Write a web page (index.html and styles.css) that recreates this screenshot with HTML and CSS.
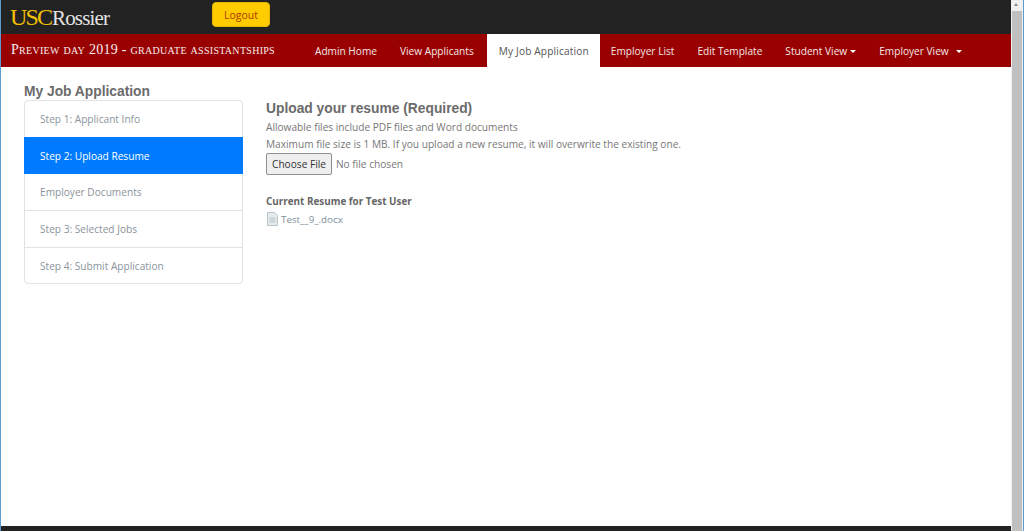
FILE: index.html
```html
<!DOCTYPE html>
<html lang="en">
<head>
    <meta charset="UTF-8">
    <meta name="viewport" content="width=device-width, initial-scale=1.0">
    <title>My Job Application</title>
    <link rel="stylesheet" href="styles.css">
</head>
<body>

<div class="page">
    <div class="topbar">
        <a class="logo" href="#"><span class="logo-usc">USC</span><span class="logo-rossier">Rossier</span></a>
        <button class="logout">Logout</button>
    </div>

    <div class="navbar">
        <div class="event-title">Preview day 2019 - graduate assistantships</div>
        <ul class="nav">
            <li><a href="#">Admin Home</a></li>
            <li><a href="#">View Applicants</a></li>
            <li class="active"><a href="#">My Job Application</a></li>
            <li><a href="#">Employer List</a></li>
            <li><a href="#">Edit Template</a></li>
            <li><a href="#" class="dropdown">Student View</a></li>
            <li><a href="#" class="dropdown spaced">Employer View</a></li>
        </ul>
    </div>

    <div class="content">
        <div class="sidebar">
            <h2>My Job Application</h2>
            <div class="steps">
                <a href="#">Step 1: Applicant Info</a>
                <a href="#" class="active">Step 2: Upload Resume</a>
                <a href="#">Employer Documents</a>
                <a href="#">Step 3: Selected Jobs</a>
                <a href="#">Step 4: Submit Application</a>
            </div>
        </div>

        <div class="main">
            <h3>Upload your resume (Required)</h3>
            <p>Allowable files include PDF files and Word documents</p>
            <p>Maximum file size is 1 MB. If you upload a new resume, it will overwrite the existing one.</p>
            <div class="file-row">
                <button class="choose">Choose File</button>
                <span>No file chosen</span>
            </div>
            <h4>Current Resume for Test User</h4>
            <a class="file-link" href="#">
                <svg width="11" height="14" viewBox="0 0 11 14">
                    <path d="M.5.5h7l3 3v10H.5z" fill="#e6ecee" stroke="#b9c3c8"/>
                    <path d="M2.5 6h6M2.5 8h6M2.5 10h6" stroke="#b5c0c5"/>
                </svg>
                Test__9_.docx
            </a>
        </div>
    </div>

    <div class="footer"></div>
</div>

<div class="scrollbar">
    <div class="arrow"></div>
    <div class="thumb"></div>
</div>

</body>
</html>
```

FILE: styles.css
```css
html, body {
    height: 100%;
}

body {
    font-family: 'Open Sans', sans-serif;
    font-size: 10.15px;
    background-color: #fff;
    color: #777;
    margin: 0;
    display: flex;
    overflow: hidden;
    border-left: 1px solid #5b9bd0;
    border-right: 1px solid #5b9bd0;
    box-sizing: border-box;
}

a {
    text-decoration: none;
}

.page {
    flex: 1;
    display: flex;
    flex-direction: column;
    min-width: 0;
}

.topbar {
    height: 34px;
    background-color: #222;
    display: flex;
    align-items: flex-start;
    flex-shrink: 0;
}

.logo {
    font-family: 'Liberation Serif', serif;
    line-height: 24px;
    margin: 5px 0 0 9px;
    width: 202px;
    white-space: nowrap;
}

.logo-usc {
    color: #f0c000;
    font-size: 24px;
    letter-spacing: -1.9px;
}

.logo-rossier {
    color: #e4e4e4;
    font-size: 21px;
    letter-spacing: -0.85px;
    margin-left: 1px;
}

.logout {
    width: 58px;
    height: 25px;
    margin-top: 2px;
    background-color: #ffcc00;
    border: 1px solid #e5b800;
    border-radius: 4px;
    color: #b03a00;
    font-family: 'Open Sans', sans-serif;
    font-size: 10.5px;
    padding: 0;
}

.navbar {
    height: 33px;
    background-color: #990000;
    display: flex;
    flex-shrink: 0;
}

.event-title {
    font-family: 'Liberation Serif', serif;
    font-variant: small-caps;
    font-size: 14px;
    letter-spacing: 0.29px;
    color: #f8eeee;
    width: 292.5px;
    padding: 8px 0 0 10px;
    white-space: nowrap;
}

.nav {
    list-style: none;
    margin: 0;
    padding: 0;
    display: flex;
}

.nav a {
    display: block;
    height: 33px;
    line-height: 34px;
    padding: 0 11.5px;
    color: #f5e6e6;
    white-space: nowrap;
}

.nav .active {
    margin: 0 -1px 0 2px;
}

.nav .active a {
    background-color: #fff;
    color: #555;
    letter-spacing: 0.15px;
}

.dropdown::after {
    content: "";
    display: inline-block;
    margin-left: 3px;
    vertical-align: 2px;
    border-top: 3.5px solid #fff;
    border-left: 3.5px solid transparent;
    border-right: 3.5px solid transparent;
}

.spaced::after {
    margin-left: 7px;
}

.content {
    flex: 1;
    display: flex;
    padding: 15px 0 0 23px;
}

.sidebar {
    width: 219px;
    margin-right: 23px;
}

.sidebar h2 {
    font-family: 'Liberation Sans', sans-serif;
    font-size: 13.8px;
    line-height: 20px;
    margin: 0 0 -2px;
    color: #6b6b6b;
}

.steps {
    border: 1px solid #e2e2e2;
    border-radius: 4px;
    background: #fff;
}

.steps a {
    display: block;
    height: 36px;
    line-height: 36px;
    padding-left: 15px;
    color: #8a949c;
    border-bottom: 1px solid #e2e2e2;
}

.steps a:last-child {
    height: 35px;
    border-bottom: none;
}

.steps a.active {
    background-color: #007bff;
    color: #fff;
    margin: -1px -1px 0;
    padding-left: 16px;
    height: 37px;
    line-height: 38px;
    border-bottom: none;
}

.main {
    padding-top: 18px;
}

.main h3 {
    font-family: 'Liberation Sans', sans-serif;
    font-size: 13.8px;
    line-height: 18px;
    margin: 0 0 1px;
    color: #6b6b6b;
}

.main p {
    margin: 0;
    line-height: 17px;
}

.file-row {
    display: flex;
    align-items: center;
    gap: 4px;
}

.choose {
    width: 66px;
    height: 22px;
    padding: 0;
    background-color: #efefef;
    border: 1px solid #8f8f8f;
    border-radius: 2px;
    color: #333;
    font-family: 'Open Sans', sans-serif;
    font-size: 10.15px;
}

.main h4 {
    font-size: 9.9px;
    line-height: 14px;
    margin: 19px 0 4px;
    color: #666;
}

.file-link {
    display: flex;
    align-items: center;
    gap: 3px;
    margin-left: 1px;
    font-size: 9.8px;
    color: #7d8f9c;
}

.footer {
    height: 5px;
    background-color: #222;
    flex-shrink: 0;
}

.scrollbar {
    width: 12px;
    background-color: #f0f0f0;
    flex-shrink: 0;
    display: flex;
    flex-direction: column;
}

.arrow {
    height: 11px;
    position: relative;
}

.arrow::after {
    content: "";
    position: absolute;
    top: 3px;
    left: 3px;
    border-bottom: 3px solid #888;
    border-left: 2.5px solid transparent;
    border-right: 2.5px solid transparent;
}

.thumb {
    flex: 1;
    background-color: #c0c0c0;
    margin: 0 1px;
}
```
